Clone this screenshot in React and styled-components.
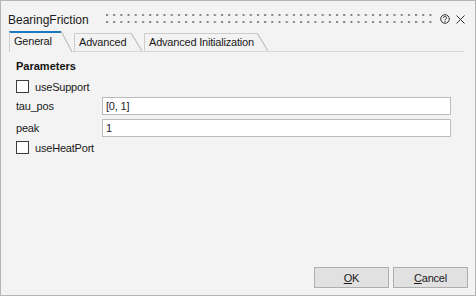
import React from "react";
import styled, { createGlobalStyle } from "styled-components";

const GlobalStyle = createGlobalStyle`
  html, body {
    margin: 0;
    padding: 0;
    background: #ffffff;
  }
  body {
    font-family: "Liberation Sans", Arial, sans-serif;
    color: #1b1b1b;
  }
`;

const Window = styled.div`
  width: 476px;
  height: 296px;
  box-sizing: border-box;
  border: 1px solid #b5b5b5;
  background: #f3f3f3;
  display: flex;
  flex-direction: column;
`;

const TitleBar = styled.div`
  height: 30px;
  display: flex;
  align-items: flex-start;
  padding: 0 10px 0 7px;
  flex-shrink: 0;
`;

const Title = styled.div`
  margin-top: 12px;
  font-size: 12px;
  line-height: 14px;
  color: #1a1a1a;
  white-space: nowrap;
`;

const Grip = styled.div`
  flex: 1;
  height: 9px;
  margin: 13px 8px 0 17px;
  background-image: radial-gradient(
    circle at 1px 1px,
    #858585 0.9px,
    transparent 1.5px
  );
  background-size: 7.2px 7px;
`;

const IconButton = styled.div`
  margin-top: ${(p) => p.top}px;
  margin-left: ${(p) => p.gap || 0}px;
  display: flex;
`;

const TabStrip = styled.div`
  height: 21px;
  box-sizing: border-box;
  margin: 0 11px 0 8px;
  border-bottom: 1px solid #d8d8d8;
  display: flex;
  align-items: flex-end;
  flex-shrink: 0;
`;

const Tab = styled.div`
  position: relative;
  box-sizing: border-box;
  width: ${(p) => p.width}px;
  height: ${(p) => (p.selected ? 21 : 18)}px;
  margin-right: 13px;
  margin-bottom: ${(p) => (p.selected ? -1 : 0)}px;
  z-index: ${(p) => (p.selected ? 1 : 0)};
  border-left: 1px solid #cdcdcd;
  border-top: ${(p) => (p.selected ? "2px solid #1c79c0" : "1px solid #cdcdcd")};
  background: #f3f3f3;
  padding: 1px 0 0 4px;
  font-size: 11px;
  line-height: 14px;
  letter-spacing: -0.2px;
  color: #1a1a1a;
  white-space: nowrap;

  &::after {
    content: "";
    position: absolute;
    left: 100%;
    top: ${(p) => (p.selected ? -2 : -1)}px;
    width: 11px;
    height: calc(100% + ${(p) => (p.selected ? 2 : 1)}px);
    background: linear-gradient(
      to top right,
      #f3f3f3 calc(50% - 1px),
      #c8c8c8 calc(50% - 0.4px),
      #c8c8c8 calc(50% + 0.4px),
      transparent calc(50% + 1px)
    );
  }
`;

const Panel = styled.div`
  flex: 1;
  display: flex;
  flex-direction: column;
  padding: 7px 24px 0 15px;
  font-size: 11px;
  letter-spacing: -0.2px;
`;

const Heading = styled.div`
  font-weight: bold;
  font-size: 11px;
  line-height: 14px;
  letter-spacing: 0;
  color: #111;
`;

const CheckRow = styled.div`
  display: flex;
  align-items: center;
  height: 13px;
  margin-top: ${(p) => p.top}px;
`;

const Box = styled.span`
  width: 13px;
  height: 13px;
  box-sizing: border-box;
  border: 1px solid #3c3c3c;
  background: #ffffff;
  flex-shrink: 0;
`;

const CheckLabel = styled.span`
  margin-left: 6px;
  line-height: 14px;
  color: #1a1a1a;
`;

const FieldRow = styled.div`
  display: flex;
  align-items: center;
  height: 18px;
  margin-top: 4px;
`;

const Label = styled.div`
  width: 86px;
  flex-shrink: 0;
  line-height: 14px;
  color: #1a1a1a;
`;

const Input = styled.div`
  flex: 1;
  height: 18px;
  box-sizing: border-box;
  border: 1px solid #bcbcbc;
  background: #ffffff;
  padding: 1px 3px 0;
  line-height: 14px;
  color: ${(p) => p.color || "#1e1e1e"};
`;

const Footer = styled.div`
  display: flex;
  justify-content: flex-end;
  gap: 4px;
  padding: 0 7px 7px 0;
  flex-shrink: 0;
`;

const Button = styled.div`
  width: 75px;
  height: 21px;
  box-sizing: border-box;
  border: 1px solid #adadad;
  background: #e1e1e1;
  display: flex;
  align-items: center;
  justify-content: center;
  font-size: 11px;
  letter-spacing: -0.2px;
  color: #1a1a1a;

  u {
    text-decoration: underline;
    text-underline-offset: 1px;
  }
`;

const HelpIcon = () => (
  <svg width="10" height="10" viewBox="0 0 10 10">
    <circle cx="5" cy="5" r="4.3" fill="none" stroke="#333" strokeWidth="1" />
    <path
      d="M3.5 3.9 A1.5 1.5 0 1 1 5.7 5.2 C5.2 5.5 5 5.8 5 6.4"
      fill="none"
      stroke="#333"
      strokeWidth="1"
    />
    <circle cx="5" cy="7.7" r="0.6" fill="#333" />
  </svg>
);

const CloseIcon = () => (
  <svg width="9" height="9" viewBox="0 0 9 9">
    <path d="M0.5 0.5 L8.5 8.5 M8.5 0.5 L0.5 8.5" stroke="#333" strokeWidth="1" />
  </svg>
);

const tabs = [
  { label: "General", width: 52 },
  { label: "Advanced", width: 57 },
  { label: "Advanced Initialization", width: 113 },
];

export default function App() {
  return (
    <>
      <GlobalStyle />
      <Window>
        <TitleBar>
          <Title>BearingFriction</Title>
          <Grip />
          <IconButton top={13}>
            <HelpIcon />
          </IconButton>
          <IconButton top={14} gap={6}>
            <CloseIcon />
          </IconButton>
        </TitleBar>

        <TabStrip>
          {tabs.map((t, i) => (
            <Tab key={t.label} width={t.width} selected={i === 0}>
              {t.label}
            </Tab>
          ))}
        </TabStrip>

        <Panel>
          <Heading>Parameters</Heading>
          <CheckRow top={7}>
            <Box />
            <CheckLabel>useSupport</CheckLabel>
          </CheckRow>
          <FieldRow>
            <Label>tau_pos</Label>
            <Input>[0, 1]</Input>
          </FieldRow>
          <FieldRow>
            <Label>peak</Label>
            <Input color="#2a1640">1</Input>
          </FieldRow>
          <CheckRow top={4}>
            <Box />
            <CheckLabel>useHeatPort</CheckLabel>
          </CheckRow>
        </Panel>

        <Footer>
          <Button>
            <u>O</u>K
          </Button>
          <Button>
            <u>C</u>ancel
          </Button>
        </Footer>
      </Window>
    </>
  );
}
